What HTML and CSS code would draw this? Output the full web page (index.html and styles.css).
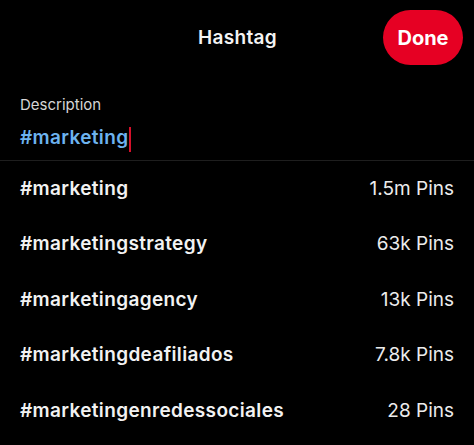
FILE: index.html
```html
<!DOCTYPE html>
<html lang="en">
<head>
    <meta charset="UTF-8">
    <meta name="viewport" content="width=device-width, initial-scale=1.0">
    <title>Hashtag</title>
    <link rel="stylesheet" href="styles.css">
</head>
<body>
    <div class="sheet">
        <div class="header">
            <div></div>
            <div class="title">Hashtag</div>
            <div class="done">Done</div>
        </div>
        <div class="field">
            <div class="label">Description</div>
            <div class="input"><span class="tag">#marketing</span><span class="cursor"></span></div>
        </div>
        <div class="results">
            <div class="row"><span class="name">#marketing</span><span class="count">1.5m Pins</span></div>
            <div class="row"><span class="name">#marketingstrategy</span><span class="count">63k Pins</span></div>
            <div class="row"><span class="name">#marketingagency</span><span class="count">13k Pins</span></div>
            <div class="row"><span class="name">#marketingdeafiliados</span><span class="count">7.8k Pins</span></div>
            <div class="row"><span class="name">#marketingenredessociales</span><span class="count">28 Pins</span></div>
        </div>
    </div>
</body>
</html>
```

FILE: styles.css
```css
body {
    margin: 0;
    background: #000;
    color: #f2f2f2;
    font-family: Inter, "Noto Sans", sans-serif;
}
.sheet {
    width: 474px;
    height: 445px;
    overflow: hidden;
}
.header {
    display: grid;
    grid-template-columns: 1fr auto 1fr;
    align-items: center;
    height: 55px;
    padding: 10px 11px 0 12px;
}
.title {
    font-size: 19px;
    font-weight: 560;
    letter-spacing: 0.3px;
    color: #f4f4f4;
}
.done {
    justify-self: end;
    width: 80px;
    height: 55px;
    border-radius: 28px;
    background: #e60023;
    color: #fff;
    font-size: 20px;
    font-weight: 650;
    display: flex;
    align-items: center;
    justify-content: center;
}
.field {
    padding: 31px 20px 11px;
    border-bottom: 1px solid #1e1e1e;
}
.label {
    font-size: 15px;
    line-height: 18px;
    color: #d6d6d6;
}
.input {
    margin-top: 13px;
    display: flex;
    align-items: center;
    height: 22px;
}
.tag {
    font-size: 19px;
    line-height: 22px;
    font-weight: 560;
    letter-spacing: 0.35px;
    color: #6db3ef;
}
.cursor {
    width: 2px;
    height: 25px;
    background: #d5102a;
    margin-left: 1px;
    margin-top: 2px;
}
.row {
    display: flex;
    justify-content: space-between;
    align-items: center;
    height: 55.5px;
    padding: 0 20px;
    font-size: 19px;
    line-height: 22px;
}
.name {
    font-weight: 560;
    letter-spacing: 0.35px;
}
.count {
    font-weight: 400;
    color: #ececec;
}
```
